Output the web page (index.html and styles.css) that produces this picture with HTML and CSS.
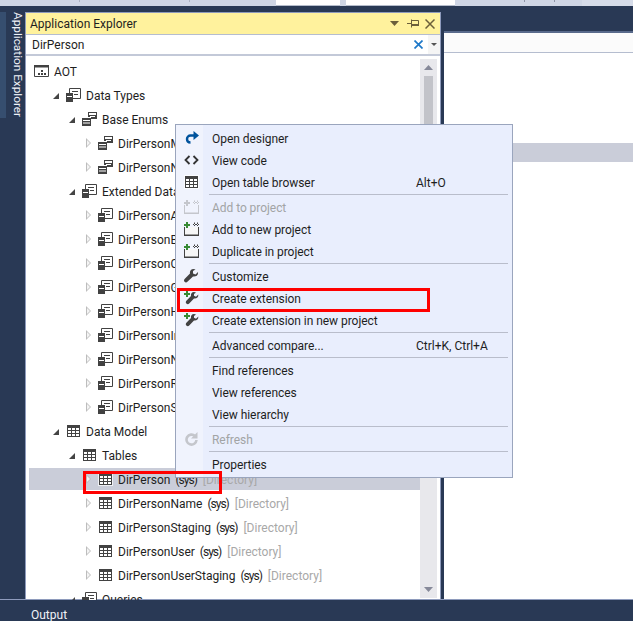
FILE: index.html
```html
<!DOCTYPE html>
<html lang="en">
<head>
<meta charset="utf-8">
<title>Application Explorer</title>
<link rel="stylesheet" href="styles.css">
</head>
<body>
<svg class="defs" width="0" height="0" aria-hidden="true">
  <symbol id="i-aot" viewBox="0 0 15 14"><path fill="#fff" stroke="#424242" d="M.5 1.500h14v11H.5z"/><path fill="#424242" d="M0 1h15v2.500H0zM7 6h2v2H7zM4 9h2v2H4zM7 9h2v2H7zM10 9h2v2h-2z"/></symbol>
  <symbol id="i-types" viewBox="0 0 15 14"><path fill="#fff" stroke="#424242" d="M3.500.500h11v10h-11z"/><path fill="#424242" d="M6 3h6v1H6zM8 6h4v1H8zM0 5h7v9H0z"/><path fill="#fff" d="M1 8h5v1H1z"/></symbol>
  <symbol id="i-enum" viewBox="0 0 15 14"><path fill="#424242" d="M6 0h9v7H6z"/><path fill="#fff" d="M7 1h7v2H7zM8 4h5v1H8z"/><path fill="#424242" d="M0 6h9v8H0z"/><path fill="#fff" d="M1 8h7v1H1zM1 10.500h7v1H1zM6 5h3v1H6z"/></symbol>
  <symbol id="i-table" viewBox="0 0 15 14"><path fill="#fff" d="M0 0h15v14H0z" opacity=".7"/><path fill="#424242" d="M1 1h13v12H1z"/><path fill="#fff" d="M2 4h3v2H2zM6 4h3v2H6zM10 4h3v2h-3zM2 7h3v2H2zM6 7h3v2H6zM10 7h3v2h-3zM2 10h3v2H2zM6 10h3v2H6zM10 10h3v2h-3z"/></symbol>
  <symbol id="i-open" viewBox="0 0 15 14"><path fill="none" stroke="#00539c" stroke-width="2.400" d="M12 4.500H6.500a3.500 3.500 0 0 0-3.500 3.500c0 2 1.500 3.500 3.500 3.500"/><path fill="#00539c" d="M9.500 0l5.500 4.500L9.500 9z"/></symbol>
  <symbol id="i-code" viewBox="0 0 15 14"><path fill="none" stroke="#333" stroke-width="1.800" d="M5.500 3L1.500 7l4 4M9.500 3l4 4-4 4"/></symbol>
  <symbol id="i-add" viewBox="0 0 15 14"><path fill="#f6f6f6" stroke="#424242" d="M.5 5v8.500h14V5"/><path fill="#424242" d="M0 12.500h15V14H0z"/><path fill="#388a34" d="M2 0h2v2h2v2H4v2H2V4H0V2h2z"/><path fill="#424242" d="M9 2h6v1H9zM10 .500v3.500h1V.500zM13 .500v3.500h1V.500z"/></symbol>
  <symbol id="i-add-off" viewBox="0 0 15 14"><path fill="none" stroke="#c4c6cc" d="M.5 5v8.500h14V5"/><path fill="#c4c6cc" d="M0 12.500h15V14H0zM2 0h2v2h2v2H4v2H2V4H0V2h2zM9 2h6v1H9zM10 .500v3.500h1V.500zM13 .500v3.500h1V.500z"/></symbol>
  <symbol id="i-wrench" viewBox="0 0 15 14"><path fill="#424242" d="M9.500 0c-2.500 0-4 2-3.500 4.500L.6 10c-.8.8-.8 2 0 2.800s2 .8 2.800 0L9 7.500C11.500 8 14.500 6.500 14 3l-2.500 2.500-2.500-1V2L11.500.5C11 .2 10.200 0 9.500 0z"/></symbol>
  <symbol id="i-ext" viewBox="0 0 15 14"><path fill="#424242" d="M10 1C7.800 1 6.500 2.800 7 5L2.400 9.800c-.8.8-.8 2 0 2.800s2 .8 2.800 0L10 7.500c2.200.5 4.700-1 4.300-4l-2.300 2.200-2-1V3l2-1.500C11.500 1.200 10.700 1 10 1z"/><path fill="#388a34" d="M2 0h2v2h2v2H4v2H2V4H0V2h2z"/></symbol>
  <symbol id="i-refresh" viewBox="0 0 15 14"><path fill="none" stroke="#c4c6cc" stroke-width="2.600" d="M11 4A5 5 0 1 0 12.500 8"/><path fill="#c4c6cc" d="M13.500 0v6.500H7z"/></symbol>
</svg>

<div class="strip">
  <span class="strip-seg seg-a"></span>
  <span class="strip-seg seg-b"></span>
  <span class="strip-seg seg-c"></span>
  <span class="strip-seg seg-input1"></span>
  <span class="strip-seg seg-gap"></span>
  <span class="strip-seg seg-input2"></span>
  <span class="strip-seg seg-d"></span>
  <span class="strip-seg seg-e"></span>
  <span class="strip-seg seg-f"></span>
  <span class="strip-seg seg-g"></span>
</div>

<main class="work">
  <aside class="rail">
    <div class="rail-tab"><span class="rail-label">Application Explorer</span></div>
  </aside>

  <section class="panel">
    <header class="panel-title">
      <span class="panel-name">Application Explorer</span>
      <svg class="t-drop" width="9" height="5" viewBox="0 0 9 5"><path fill="#6b5f3a" d="M0 0h9L4.500 5z"/></svg>
      <svg class="t-pin" width="12" height="9" viewBox="0 0 12 9"><path fill="none" stroke="#6b5f3a" d="M4.500 1.500h7v5h-7zM4.500 .5v8M0 4.500h4.500"/><path fill="#6b5f3a" d="M5 5h7v2H5z"/></svg>
      <svg class="t-close" width="10" height="10" viewBox="0 0 10 10"><path fill="none" stroke="#6b5f3a" stroke-width="1.500" d="M.5.500l9 9M9.500.500l-9 9"/></svg>
    </header>
    <div class="search">
      <span class="search-text">DirPerson</span>
      <svg class="s-clear" width="9" height="9" viewBox="0 0 9 9"><path fill="none" stroke="#1e78c8" stroke-width="1.700" d="M.5.500l8 8M8.500.500l-8 8"/></svg>
      <span class="s-drop"><svg width="6" height="3" viewBox="0 0 6 3"><path fill="#555" d="M0 0h6L3 3z"/></svg></span>
    </div>
    <div class="tree-wrap">
      <ul class="tree">
        <li class="row lv0"><span class="arrow none"></span><svg class="ico"><use href="#i-aot"/></svg><span class="lbl">AOT</span></li>
        <li class="row lv1"><span class="arrow open"></span><svg class="ico"><use href="#i-types"/></svg><span class="lbl">Data Types</span></li>
        <li class="row lv2"><span class="arrow open"></span><svg class="ico"><use href="#i-enum"/></svg><span class="lbl">Base Enums</span></li>
        <li class="row lv3"><span class="arrow shut"></span><svg class="ico"><use href="#i-enum"/></svg><span class="lbl">DirPersonMaritalStatus</span></li>
        <li class="row lv3"><span class="arrow shut"></span><svg class="ico"><use href="#i-enum"/></svg><span class="lbl">DirPersonNameSequence</span></li>
        <li class="row lv2"><span class="arrow open"></span><svg class="ico"><use href="#i-types"/></svg><span class="lbl">Extended Data Types</span></li>
        <li class="row lv3"><span class="arrow shut"></span><svg class="ico"><use href="#i-types"/></svg><span class="lbl">DirPersonAge</span></li>
        <li class="row lv3"><span class="arrow shut"></span><svg class="ico"><use href="#i-types"/></svg><span class="lbl">DirPersonBirthDay</span></li>
        <li class="row lv3"><span class="arrow shut"></span><svg class="ico"><use href="#i-types"/></svg><span class="lbl">DirPersonChildren</span></li>
        <li class="row lv3"><span class="arrow shut"></span><svg class="ico"><use href="#i-types"/></svg><span class="lbl">DirPersonGender</span></li>
        <li class="row lv3"><span class="arrow shut"></span><svg class="ico"><use href="#i-types"/></svg><span class="lbl">DirPersonHobbies</span></li>
        <li class="row lv3"><span class="arrow shut"></span><svg class="ico"><use href="#i-types"/></svg><span class="lbl">DirPersonInitials</span></li>
        <li class="row lv3"><span class="arrow shut"></span><svg class="ico"><use href="#i-types"/></svg><span class="lbl">DirPersonName</span></li>
        <li class="row lv3"><span class="arrow shut"></span><svg class="ico"><use href="#i-types"/></svg><span class="lbl">DirPersonRecId</span></li>
        <li class="row lv3"><span class="arrow shut"></span><svg class="ico"><use href="#i-types"/></svg><span class="lbl">DirPersonSuffix</span></li>
        <li class="row lv1"><span class="arrow open"></span><svg class="ico"><use href="#i-table"/></svg><span class="lbl">Data Model</span></li>
        <li class="row lv2"><span class="arrow open"></span><svg class="ico"><use href="#i-table"/></svg><span class="lbl">Tables</span></li>
        <li class="row lv3 selected"><span class="arrow shut"></span><svg class="ico"><use href="#i-table"/></svg><span class="lbl">DirPerson</span><span class="tag">(sys)</span><span class="dim">[Directory]</span></li>
        <li class="row lv3"><span class="arrow shut"></span><svg class="ico"><use href="#i-table"/></svg><span class="lbl">DirPersonName</span><span class="tag">(sys)</span><span class="dim">[Directory]</span></li>
        <li class="row lv3"><span class="arrow shut"></span><svg class="ico"><use href="#i-table"/></svg><span class="lbl">DirPersonStaging</span><span class="tag">(sys)</span><span class="dim">[Directory]</span></li>
        <li class="row lv3"><span class="arrow shut"></span><svg class="ico"><use href="#i-table"/></svg><span class="lbl">DirPersonUser</span><span class="tag">(sys)</span><span class="dim">[Directory]</span></li>
        <li class="row lv3"><span class="arrow shut"></span><svg class="ico"><use href="#i-table"/></svg><span class="lbl">DirPersonUserStaging</span><span class="tag">(sys)</span><span class="dim">[Directory]</span></li>
        <li class="row lv2"><span class="arrow open"></span><svg class="ico"><use href="#i-types"/></svg><span class="lbl">Queries</span></li>
      </ul>
      <div class="scrollbar">
        <span class="sb-btn"><svg width="9" height="5" viewBox="0 0 9 5"><path fill="#868999" d="M4.500 0l4.500 5H0z"/></svg></span>
        <span class="sb-track"><span class="sb-thumb"></span></span>
        <span class="sb-btn"><svg width="9" height="5" viewBox="0 0 9 5"><path fill="#868999" d="M0 0h9L4.500 5z"/></svg></span>
      </div>
    </div>
  </section>

  <section class="doc">
    <div class="doc-bar"></div>
    <div class="doc-body"><div class="doc-line"></div></div>
  </section>
</main>

<footer class="output">Output</footer>

<nav class="menu">
  <div class="mi"><svg class="mi-ico"><use href="#i-open"/></svg><span class="mi-text">Open designer</span></div>
  <div class="mi"><svg class="mi-ico"><use href="#i-code"/></svg><span class="mi-text">View code</span></div>
  <div class="mi"><svg class="mi-ico"><use href="#i-table"/></svg><span class="mi-text">Open table browser</span><span class="mi-key">Alt+O</span></div>
  <div class="sep"></div>
  <div class="mi off"><svg class="mi-ico"><use href="#i-add-off"/></svg><span class="mi-text">Add to project</span></div>
  <div class="mi"><svg class="mi-ico"><use href="#i-add"/></svg><span class="mi-text">Add to new project</span></div>
  <div class="mi"><svg class="mi-ico"><use href="#i-add"/></svg><span class="mi-text">Duplicate in project</span></div>
  <div class="sep"></div>
  <div class="mi"><svg class="mi-ico"><use href="#i-wrench"/></svg><span class="mi-text">Customize</span></div>
  <div class="mi"><svg class="mi-ico"><use href="#i-ext"/></svg><span class="mi-text">Create extension</span></div>
  <div class="mi"><svg class="mi-ico"><use href="#i-ext"/></svg><span class="mi-text">Create extension in new project</span></div>
  <div class="sep"></div>
  <div class="mi"><span class="mi-ico"></span><span class="mi-text">Advanced compare...</span><span class="mi-key">Ctrl+K, Ctrl+A</span></div>
  <div class="sep"></div>
  <div class="mi"><span class="mi-ico"></span><span class="mi-text">Find references</span></div>
  <div class="mi"><span class="mi-ico"></span><span class="mi-text">View references</span></div>
  <div class="mi"><span class="mi-ico"></span><span class="mi-text">View hierarchy</span></div>
  <div class="sep"></div>
  <div class="mi off"><svg class="mi-ico"><use href="#i-refresh"/></svg><span class="mi-text">Refresh</span></div>
  <div class="sep"></div>
  <div class="mi"><span class="mi-ico"></span><span class="mi-text">Properties</span></div>
</nav>

<div class="mark mark-row"></div>
<div class="mark mark-menu"></div>
</body>
</html>
```

FILE: styles.css
```css
* { box-sizing: border-box; }
html, body { margin: 0; padding: 0; }
body {
  position: relative;
  width: 633px;
  height: 621px;
  overflow: hidden;
  display: flex;
  flex-direction: column;
  background: #293955;
  color: #1e1e1e;
  font-family: Roboto, "Noto Sans", sans-serif;
  font-size: 12px;
}
.defs { position: absolute; }
ul { list-style: none; margin: 0; padding: 0; }

/* toolbar remnant */
.strip { flex: none; height: 6px; display: flex; background: #cfd6e5; }
.strip-seg { height: 6px; flex: none; }
.seg-a { width: 80px; border-right: 1px solid #aab1c2; height: 2px; }
.seg-b { width: 110px; border-right: 1px solid #aab1c2; height: 2px; }
.seg-c { width: 86px; }
.seg-input1 { width: 64px; background: #fff; border-bottom: 1px solid #b5bccb; }
.seg-gap { width: 6px; }
.seg-input2 { width: 109px; background: #fff; border-bottom: 1px solid #b5bccb; }
.seg-d { width: 70px; border-right: 1px solid #8f96a8; height: 2px; }
.seg-e { width: 30px; border-right: 1px solid #8f96a8; height: 2px; }
.seg-f { width: 27px; }
.seg-g { flex: 1; background: #d6dce9; }

.work { flex: none; height: 594px; display: flex; }

/* left rail */
.rail { flex: none; width: 25px; padding-top: 6px; }
.rail-tab {
  width: 25px;
  height: 106px;
  border-left: 6px solid #364e6f;
  padding-left: 4px;
  display: flex;
  justify-content: center;
}
.rail-label {
  writing-mode: vertical-rl;
  color: #f0f2f8;
  font-size: 11.8px;
  line-height: 17px;
  white-space: nowrap;
}

/* explorer panel */
.panel {
  flex: none;
  width: 416px;
  margin-top: 6px;
  height: 588px;
  background: #fff;
  border: 1px solid #8e9bbc;
  border-bottom: 0;
  display: flex;
  flex-direction: column;
}
.panel-title {
  flex: none;
  height: 21px;
  background: #fff29d;
  display: flex;
  align-items: center;
  padding-left: 4px;
}
.panel-name { flex: 1; color: #1e1e1e; }
.t-drop { margin-right: 8px; }
.t-pin { margin-right: 6px; }
.t-close { margin-right: 5px; }

.search {
  flex: none;
  height: 22px;
  background: #fff;
  border-top: 1px solid #b5bdcf;
  border-bottom: 2px solid #c3c9d8;
  display: flex;
  align-items: center;
  padding-left: 6px;
}
.search-text { flex: 1; }
.s-clear { margin-right: 5px; }
.s-drop {
  width: 12px;
  height: 19px;
  background: #f5f5f5;
  display: flex;
  align-items: center;
  justify-content: center;
}

.tree-wrap { flex: 1; min-height: 0; display: flex; overflow: hidden; position: relative; }
.tree { flex: 1; min-width: 0; padding-top: 3px; padding-left: 3px; overflow: hidden; }
.row {
  height: 24px;
  display: flex;
  align-items: center;
  white-space: nowrap;
}
.row.selected { background: linear-gradient(#fff 1px, #cacdd9 1px, #cacdd9 23px, #fff 23px); }
.lv0 { padding-left: 5px; }
.lv1 { padding-left: 21px; }
.lv2 { padding-left: 37px; }
.lv3 { padding-left: 53px; }
.arrow { flex: none; width: 11px; height: 10px; margin-right: 5px; position: relative; }
.arrow.none { width: 0; margin-right: 0; }
.arrow.open::before {
  content: "";
  position: absolute;
  right: 2px;
  bottom: 1px;
  border-style: solid;
  border-width: 0 0 6px 6px;
  border-color: transparent transparent #444 transparent;
}
.arrow.shut::before {
  content: "";
  position: absolute;
  left: 4px;
  top: 0;
  border-style: solid;
  border-width: 5px 0 5px 5px;
  border-color: transparent transparent transparent #bdbdbd;
}
.arrow.shut::after {
  content: "";
  position: absolute;
  left: 5px;
  top: 2px;
  border-style: solid;
  border-width: 3px 0 3px 3px;
  border-color: transparent transparent transparent #f4f4f4;
}
.ico { flex: none; width: 15px; height: 14px; margin-right: 5px; }
.lbl, .tag, .dim { padding-top: 2px; }
.lbl { margin-right: 5px; }
.tag { margin-right: 6px; letter-spacing: -1px; }
.dim { color: #a8a8a8; }

/* scrollbar */
.scrollbar {
  flex: none;
  width: 17px;
  margin: 3px 3px 2px 0;
  background: #e8e8ec;
  display: flex;
  flex-direction: column;
}
.sb-btn { flex: none; height: 17px; display: flex; align-items: center; justify-content: center; }
.sb-track { flex: 1; padding: 0 4px; }
.sb-thumb { display: block; width: 9px; height: 150px; background: #c2c3c9; }

/* document */
.doc { flex: 1; margin: 25px 0 0 3px; display: flex; flex-direction: column; background: #fff; border-top: 2px solid #596a8b; }
.doc-bar { flex: none; height: 20px; background: #fbfbfb; border-bottom: 1px solid #b5bdcf; }
.doc-body { flex: 1; padding-top: 90px; border-bottom: 1px solid #8e9bbc; }
.doc-line { height: 19px; background: #cacdd9; }

.output {
  flex: none;
  height: 21px;
  border-top: 1px solid #8e9bbc;
  margin-top: -1px;
  padding: 7px 0 0 31px;
  color: #f0f2f8;
  line-height: 16px;
}

/* context menu */
.menu {
  position: absolute;
  left: 175px;
  top: 124px;
  width: 338px;
  height: 354px;
  padding: 2px 1px 2px 1px;
  background: linear-gradient(90deg, #f0f3fd 27px, #e9eefd 27px);
  border: 1px solid #9aa5bd;
}
.mi { height: 22px; display: flex; align-items: center; }
.mi-ico { flex: none; width: 15px; height: 14px; margin: 0 13px 0 7px; }
.mi-text { flex: none; width: 204px; white-space: nowrap; padding-top: 2px; letter-spacing: -.05px; }
.mi-key { white-space: nowrap; padding-top: 2px; }
.off { color: #a2a4a5; }
.sep { height: 3px; margin: 0 3px 0 32px; background: linear-gradient(#b9bdcb, #b9bdcb) center / 100% 1px no-repeat; }

/* red annotations */
.mark { position: absolute; border: 3px solid #f00; }
.mark-row { left: 83px; top: 471px; width: 139px; height: 23px; }
.mark-menu { left: 177px; top: 288px; width: 253px; height: 24px; }
```
